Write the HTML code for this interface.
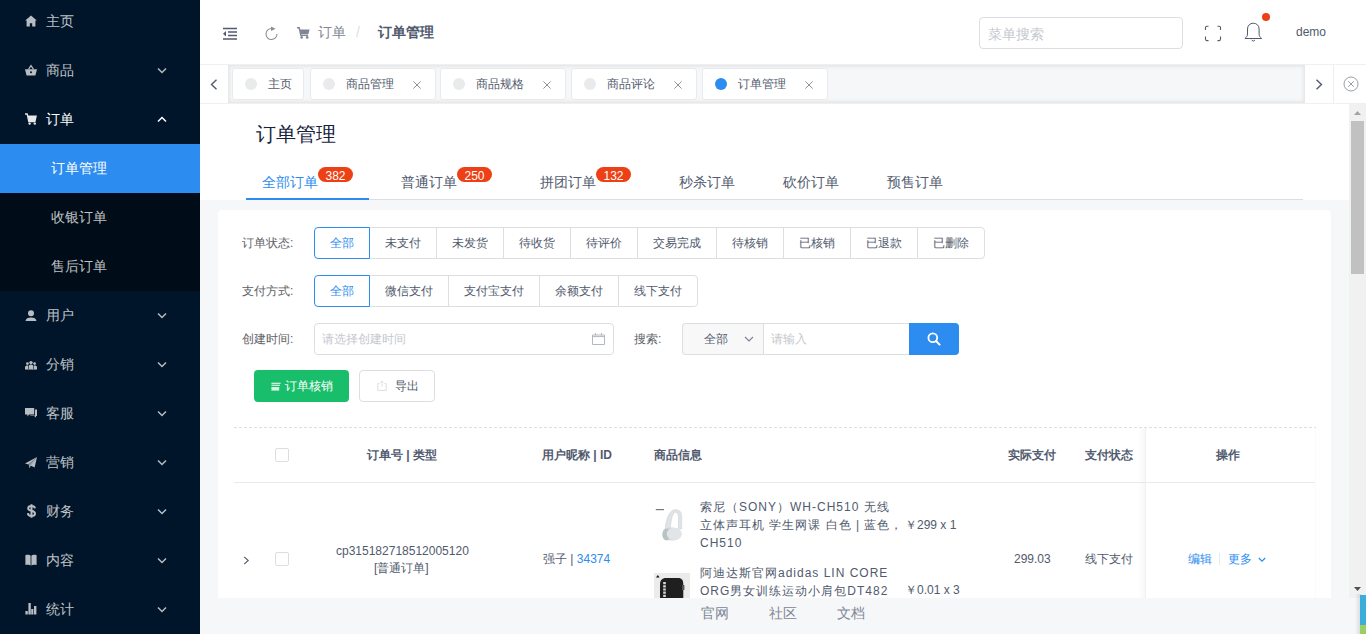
<!DOCTYPE html>
<html><head><meta charset="utf-8">
<style>
*{box-sizing:border-box;margin:0;padding:0}
html,body{width:1366px;height:634px;overflow:hidden;background:#f5f7f9;font-family:"Liberation Sans",sans-serif;}
.a{position:absolute}
/* sidebar */
#side{position:absolute;left:0;top:0;width:200px;height:634px;background:#001529;overflow:hidden}
.mi{position:absolute;left:0;width:200px;height:49px;line-height:49px;font-size:14px;color:rgba(255,255,255,.75)}
.mi .ic{position:absolute;left:25px;top:18px;width:12px;height:12px}
.mi .tx{position:absolute;left:46px;top:0}
.mi .ch{position:absolute;left:157px;top:21px;width:10px;height:7px}
.sub{position:absolute;left:0;width:200px;height:49px;line-height:49px;font-size:14px;color:rgba(255,255,255,.75);background:#000c17}
.sub .tx{position:absolute;left:51px;top:0}
/* header */
#hdr{position:absolute;left:200px;top:0;width:1166px;height:64px;background:#fff}
#tabs{position:absolute;left:200px;top:64px;width:1166px;height:40px;background:#fff;border-top:1px solid #f0f0f0;border-bottom:1px solid #f0f0f0}
#so{position:absolute;left:28px;top:0;width:1077px;height:38px;background:#f5f7f9;box-shadow:inset 0 0 3px 2px rgba(100,100,100,.1)}
.tg{position:absolute;top:3px;height:32px;background:#fff;border:1px solid #e8eaec;border-radius:3px;font-size:12px;color:#515a6e;line-height:30px}
.tg .dot{position:absolute;left:12px;top:9px;width:12px;height:12px;border-radius:50%;background:#e8eaec}
.tg .t{position:absolute;left:35px;top:0}
.tg .x{position:absolute;top:12px;width:8px;height:8px}
/* content */
#main{position:absolute;left:200px;top:104px;width:1149px;height:494px;overflow:hidden;background:#f5f7f9}
#foot{position:absolute;left:200px;top:598px;width:1166px;height:36px;background:#f5f7f9;font-size:14px;color:#808695}
.lab{position:absolute;font-size:12px;color:#606266;line-height:32px}
.rb{position:absolute;height:32px;line-height:30px;font-size:12px;color:#515a6e;border:1px solid #dcdee2;background:#fff;text-align:center}
.bdg{position:absolute;top:63px;height:15px;width:35px;border-radius:8px;background:#ed4014;color:#fff;font-size:12px;line-height:18px;text-align:center}
.cb{position:absolute;width:14px;height:14px;border:1px solid #dcdee2;border-radius:2px;background:#fff}
.th{position:absolute;top:236px;font-size:12px;line-height:18px;font-weight:bold;color:#515a6e;white-space:nowrap}
.td{position:absolute;font-size:12px;line-height:18px;color:#515a6e;white-space:nowrap}
.gi{font-size:12px;line-height:18px;color:#515a6e;letter-spacing:1px;white-space:nowrap}
</style></head><body>

<div id="side">
  <div class="mi" style="top:-3px"><svg class="ic" viewBox="0 0 12 12"><path d="M6 0.6L0.2 5.6H1.6V11.6H4.8V8.2H7.2V11.6H10.4V5.6H11.8Z" fill="#b8bcc3"/></svg><span class="tx">主页</span></div>
  <div class="mi" style="top:46px"><svg class="ic" viewBox="0 0 12 12"><path d="M0 5.2H12L10.4 11.6H1.6Z" fill="#b8bcc3"/><path d="M3.6 5.2L6 1.6L8.4 5.2" stroke="#b8bcc3" stroke-width="1.2" fill="none"/><circle cx="6" cy="8.2" r="1" fill="#001529"/></svg><span class="tx">商品</span><svg class="ch" viewBox="0 0 10 7"><path d="M1 1.5L5 5.5L9 1.5" stroke="#b8bcc3" stroke-width="1.5" fill="none"/></svg></div>
  <div class="mi" style="top:95px;color:#fff"><svg class="ic" viewBox="0 0 12 12"><path d="M0 1H2.2L3.8 8.6H10.6" stroke="#e8e8ea" stroke-width="1.3" fill="none"/><path d="M2.6 2.6H11.9L10.7 8H3.8Z" fill="#e8e8ea"/><circle cx="4.6" cy="10.6" r="1.2" fill="#e8e8ea"/><circle cx="9.8" cy="10.6" r="1.2" fill="#e8e8ea"/></svg><span class="tx">订单</span><svg class="ch" viewBox="0 0 10 7"><path d="M1 5.5L5 1.5L9 5.5" stroke="#fff" stroke-width="1.5" fill="none"/></svg></div>
  <div class="sub" style="top:144px;background:#2d8cf0;color:#fff"><span class="tx">订单管理</span></div>
  <div class="sub" style="top:193px"><span class="tx">收银订单</span></div>
  <div class="sub" style="top:242px"><span class="tx">售后订单</span></div>
  <div class="mi" style="top:291px"><svg class="ic" viewBox="0 0 12 12"><circle cx="6" cy="4.2" r="3" fill="#b8bcc3"/><path d="M0.5 12.4C0.5 9.6 2.8 8.4 6 8.4S11.5 9.6 11.5 12.4Z" fill="#b8bcc3"/></svg><span class="tx">用户</span><svg class="ch" viewBox="0 0 10 7"><path d="M1 1.5L5 5.5L9 1.5" stroke="#b8bcc3" stroke-width="1.5" fill="none"/></svg></div>
  <div class="mi" style="top:340px"><svg class="ic" viewBox="0 0 12 12"><circle cx="6" cy="4.6" r="1.7" fill="#b8bcc3"/><circle cx="2.4" cy="5.6" r="1.4" fill="#b8bcc3"/><circle cx="9.6" cy="5.6" r="1.4" fill="#b8bcc3"/><path d="M3.7 11V8.6C3.7 7.3 4.7 6.6 6 6.6S8.3 7.3 8.3 8.6V11Z" fill="#b8bcc3"/><path d="M0 11V9.2C0 8 1 7.4 2.4 7.4C2.9 7.4 3.1 7.5 3.1 7.5V11Z" fill="#b8bcc3"/><path d="M12 11V9.2C12 8 11 7.4 9.6 7.4C9.1 7.4 8.9 7.5 8.9 7.5V11Z" fill="#b8bcc3"/><path d="M0 11.4H12" stroke="#b8bcc3" stroke-width="0.6"/></svg><span class="tx">分销</span><svg class="ch" viewBox="0 0 10 7"><path d="M1 1.5L5 5.5L9 1.5" stroke="#b8bcc3" stroke-width="1.5" fill="none"/></svg></div>
  <div class="mi" style="top:389px"><svg class="ic" viewBox="0 0 12 12"><path d="M0 1H9.2V7.6H4.2L2.4 9.4V7.6H0Z" fill="#b8bcc3"/><path d="M10 2.4H12V9H11V10.8L9.2 9H5.2V8.4H10Z" fill="#b8bcc3"/></svg><span class="tx">客服</span><svg class="ch" viewBox="0 0 10 7"><path d="M1 1.5L5 5.5L9 1.5" stroke="#b8bcc3" stroke-width="1.5" fill="none"/></svg></div>
  <div class="mi" style="top:438px"><svg class="ic" viewBox="0 0 12 12"><path d="M12 1L0 7.4L3.6 8.6Z" fill="#b8bcc3"/><path d="M12 1L4.4 9L9.6 11.6Z" fill="#b8bcc3"/><path d="M12 1L3.8 8.8L4.4 12.6L5.8 9.8Z" fill="#9aa0a8"/></svg><span class="tx">营销</span><svg class="ch" viewBox="0 0 10 7"><path d="M1 1.5L5 5.5L9 1.5" stroke="#b8bcc3" stroke-width="1.5" fill="none"/></svg></div>
  <div class="mi" style="top:487px"><svg class="ic" style="left:26px;top:17px;width:11px;height:14px" viewBox="0 0 11 14"><path d="M8.9 4.3C8.7 2.7 7.4 2.1 5.5 2.1C3.5 2.1 2.2 3 2.2 4.5C2.2 7.6 9 6 9 9.4C9 11 7.6 11.9 5.5 11.9C3.3 11.9 2 10.9 1.9 9.1 M5.5 0.2V13.8" stroke="#b8bcc3" stroke-width="2" fill="none"/></svg><span class="tx">财务</span><svg class="ch" viewBox="0 0 10 7"><path d="M1 1.5L5 5.5L9 1.5" stroke="#b8bcc3" stroke-width="1.5" fill="none"/></svg></div>
  <div class="mi" style="top:536px"><svg class="ic" viewBox="0 0 12 12"><path d="M0.4 1.2C2.4 0.6 4.6 0.8 5.6 1.8V11.6C4.6 10.6 2.4 10.4 0.4 11Z" fill="#b8bcc3"/><path d="M11.6 1.2C9.6 0.6 7.4 0.8 6.4 1.8V11.6C7.4 10.6 9.6 10.4 11.6 11Z" fill="#b8bcc3"/></svg><span class="tx">内容</span><svg class="ch" viewBox="0 0 10 7"><path d="M1 1.5L5 5.5L9 1.5" stroke="#b8bcc3" stroke-width="1.5" fill="none"/></svg></div>
  <div class="mi" style="top:585px"><svg class="ic" viewBox="0 0 12 12"><path d="M0.4 8H2.8V11.6H0.4Z M3.4 0H5.8V11.6H3.4Z M6.2 6H8.4V11.6H6.2Z M9 3H11.4V11.6H9Z" fill="#b8bcc3"/></svg><span class="tx">统计</span><svg class="ch" viewBox="0 0 10 7"><path d="M1 1.5L5 5.5L9 1.5" stroke="#b8bcc3" stroke-width="1.5" fill="none"/></svg></div>
</div>

<div id="hdr">
  <svg class="a" style="left:22px;top:27px" width="16" height="14" viewBox="0 0 16 14"><path d="M1 1.5H15M6 5H15M6 8.5H15M1 12H15" stroke="#515a6e" stroke-width="1.4" fill="none"/><path d="M4 4L1 6.8L4 9.6Z" fill="#515a6e"/></svg>
  <svg class="a" style="left:64px;top:26px" width="15" height="15" viewBox="0 0 15 15"><path d="M7.8 2.5A5.5 5.5 0 1 0 13 8" stroke="#8a8e96" stroke-width="1.1" fill="none"/><path d="M7 0.4L11.6 2.7L7 5Z" fill="#8a8e96"/></svg>
  <svg class="a" style="left:97px;top:27px" width="13" height="12" viewBox="0 0 13 12"><path d="M0 0.8H2.2L3.8 8.4H11" stroke="#808695" stroke-width="1.4" fill="none"/><path d="M2.8 2.4H12.6L11.4 7.2H3.8Z" fill="#808695"/><circle cx="4.6" cy="10.4" r="1.3" fill="#808695"/><circle cx="10.2" cy="10.4" r="1.3" fill="#808695"/></svg>
  <span class="a" style="left:118px;top:24px;font-size:14px;color:#808695">订单</span>
  <span class="a" style="left:156px;top:24px;font-size:14px;color:#dcdee2">/</span>
  <span class="a" style="left:178px;top:24px;font-size:14px;color:#515a6e;font-weight:bold">订单管理</span>
  <div class="a" style="left:779px;top:17px;width:204px;height:32px;border:1px solid #dcdee2;border-radius:4px"><span class="a" style="left:8px;top:8px;font-size:14px;color:#c5c8ce">菜单搜索</span></div>
  <svg class="a" style="left:1004px;top:25px" width="18" height="17" viewBox="0 0 18 17"><path d="M1.5 5V2.5Q1.5 1.2 2.8 1.2H4.5M13.5 1.2H15.2Q16.5 1.2 16.5 2.5V5M16.5 11.5V14Q16.5 15.6 15.2 15.6H13.5M4.5 15.6H2.8Q1.5 15.6 1.5 14V11.5" stroke="#515a6e" stroke-width="1.1" fill="none"/></svg>
  <svg class="a" style="left:1044px;top:22px" width="19" height="21" viewBox="0 0 19 21"><path d="M0.9 16.5C2.6 15 3.5 14 3.5 12V7C3.5 3.6 6 1.2 9.3 1.2C12.6 1.2 15.1 3.6 15.1 7V12C15.1 14 16 15 17.7 16.5Z" stroke="#515a6e" stroke-width="1" fill="none" stroke-linejoin="round"/><path d="M7.6 18Q9.3 20.4 11 18" stroke="#515a6e" stroke-width="1" fill="none"/></svg>
  <div class="a" style="left:1062px;top:13px;width:8px;height:8px;border-radius:50%;background:#ed4014"></div>
  <span class="a" style="left:1096px;top:25px;font-size:12px;color:#515a6e">demo</span>
</div>
<div id="tabs">
  <div id="so"></div>
  <div class="a" style="left:0;top:0;width:28px;height:38px;background:#fff"><svg class="a" style="left:10px;top:14px" width="8" height="11" viewBox="0 0 8 11"><path d="M6.5 0.8L1.5 5.5L6.5 10.2" stroke="#515a6e" stroke-width="1.4" fill="none"/></svg></div>
  <div class="tg" style="left:32px;width:72px"><div class="dot"></div><span class="t">主页</span></div>
  <div class="tg" style="left:110px;width:126px"><div class="dot"></div><span class="t">商品管理</span><svg class="x" style="left:102px" viewBox="0 0 8 8"><path d="M0.4 0.4L7.6 7.6M7.6 0.4L0.4 7.6" stroke="#8e939b" stroke-width="1"/></svg></div>
  <div class="tg" style="left:240px;width:126px"><div class="dot"></div><span class="t">商品规格</span><svg class="x" style="left:102px" viewBox="0 0 8 8"><path d="M0.4 0.4L7.6 7.6M7.6 0.4L0.4 7.6" stroke="#8e939b" stroke-width="1"/></svg></div>
  <div class="tg" style="left:371px;width:126px"><div class="dot"></div><span class="t">商品评论</span><svg class="x" style="left:102px" viewBox="0 0 8 8"><path d="M0.4 0.4L7.6 7.6M7.6 0.4L0.4 7.6" stroke="#8e939b" stroke-width="1"/></svg></div>
  <div class="tg" style="left:502px;width:126px"><div class="dot" style="background:#2d8cf0"></div><span class="t">订单管理</span><svg class="x" style="left:102px" viewBox="0 0 8 8"><path d="M0.4 0.4L7.6 7.6M7.6 0.4L0.4 7.6" stroke="#8e939b" stroke-width="1"/></svg></div>
  <div class="a" style="left:1105px;top:0;width:29px;height:38px;background:#fff;border-right:1px solid #eee"><svg class="a" style="left:10px;top:14px" width="8" height="11" viewBox="0 0 8 11"><path d="M1.5 0.8L6.5 5.5L1.5 10.2" stroke="#515a6e" stroke-width="1.4" fill="none"/></svg></div>
  <div class="a" style="left:1134px;top:0;width:32px;height:38px;background:#fff"><svg class="a" style="left:9px;top:11px" width="16" height="16" viewBox="0 0 16 16"><circle cx="8" cy="8" r="7" stroke="#9a9ea6" stroke-width="1" fill="none"/><path d="M5.2 5.2L10.8 10.8M10.8 5.2L5.2 10.8" stroke="#9a9ea6" stroke-width="1"/></svg></div>
</div>
<div id="main">
  <div class="a" style="left:0;top:0;width:1149px;height:96px;background:#fff">
    <span class="a" style="left:56px;top:17px;font-size:20px;color:#17233d">订单管理</span>
    <div class="a" style="left:46px;top:95px;width:1057px;height:1px;background:#dcdee2"></div>
    <div class="a" style="left:46px;top:94px;width:123px;height:2px;background:#2d8cf0"></div>
    <span class="a" style="left:62px;top:70px;font-size:14px;color:#2d8cf0">全部订单</span>
    <span class="bdg" style="left:118px">382</span>
    <span class="a" style="left:201px;top:70px;font-size:14px;color:#515a6e">普通订单</span>
    <span class="bdg" style="left:257px">250</span>
    <span class="a" style="left:340px;top:70px;font-size:14px;color:#515a6e">拼团订单</span>
    <span class="bdg" style="left:396px">132</span>
    <span class="a" style="left:479px;top:70px;font-size:14px;color:#515a6e">秒杀订单</span>
    <span class="a" style="left:583px;top:70px;font-size:14px;color:#515a6e">砍价订单</span>
    <span class="a" style="left:687px;top:70px;font-size:14px;color:#515a6e">预售订单</span>
  </div>
  <div id="card" class="a" style="left:18px;top:106px;width:1113px;height:420px;background:#fff;border-radius:4px">
    <span class="lab" style="left:24px;top:17px">订单状态:</span>
    <div class="rb" style="left:96px;top:17px;width:56px;border-radius:4px 0 0 4px;border-color:#2d8cf0;color:#2d8cf0;z-index:2;">全部</div>
    <div class="rb" style="left:151px;top:17px;width:68px;">未支付</div>
    <div class="rb" style="left:218px;top:17px;width:68px;">未发货</div>
    <div class="rb" style="left:285px;top:17px;width:68px;">待收货</div>
    <div class="rb" style="left:352px;top:17px;width:68px;">待评价</div>
    <div class="rb" style="left:419px;top:17px;width:80px;">交易完成</div>
    <div class="rb" style="left:498px;top:17px;width:68px;">待核销</div>
    <div class="rb" style="left:565px;top:17px;width:68px;">已核销</div>
    <div class="rb" style="left:632px;top:17px;width:68px;">已退款</div>
    <div class="rb" style="left:699px;top:17px;width:68px;border-radius:0 4px 4px 0;">已删除</div>
    <span class="lab" style="left:24px;top:65px">支付方式:</span>
    <div class="rb" style="left:96px;top:65px;width:56px;border-radius:4px 0 0 4px;border-color:#2d8cf0;color:#2d8cf0;z-index:2;">全部</div>
    <div class="rb" style="left:151px;top:65px;width:80px;">微信支付</div>
    <div class="rb" style="left:230px;top:65px;width:92px;">支付宝支付</div>
    <div class="rb" style="left:321px;top:65px;width:80px;">余额支付</div>
    <div class="rb" style="left:400px;top:65px;width:80px;border-radius:0 4px 4px 0;">线下支付</div>
    <span class="lab" style="left:24px;top:113px">创建时间:</span>
    <div class="a" style="left:96px;top:113px;width:300px;height:32px;border:1px solid #dcdee2;border-radius:4px;background:#fff">
      <span class="a" style="left:7px;top:7px;font-size:12px;color:#c5c8ce;line-height:16px">请选择创建时间</span>
      <svg class="a" style="left:277px;top:9px" width="13" height="12" viewBox="0 0 13 12"><path d="M0.5 2H12.5V11.5H0.5Z M0.5 3.6H12.5 M3.5 0V2.5 M9.5 0V2.5" stroke="#b3b7bf" stroke-width="1" fill="none"/></svg>
    </div>
    <span class="lab" style="left:416px;top:113px">搜索:</span>
    <div class="a" style="left:464px;top:113px;width:82px;height:32px;border:1px solid #dcdee2;border-right:0;border-radius:4px 0 0 4px;background:#f8f8f9">
      <span class="a" style="left:21px;top:7px;font-size:12px;color:#515a6e;line-height:16px">全部</span>
      <svg class="a" style="left:61px;top:12px" width="10" height="7" viewBox="0 0 10 7"><path d="M1 1L5 5L9 1" stroke="#808695" stroke-width="1.2" fill="none"/></svg>
    </div>
    <div class="a" style="left:545px;top:113px;width:147px;height:32px;border:1px solid #dcdee2;background:#fff">
      <span class="a" style="left:7px;top:7px;font-size:12px;color:#c5c8ce;line-height:16px">请输入</span>
    </div>
    <div class="a" style="left:691px;top:113px;width:50px;height:32px;background:#2d8cf0;border-radius:0 4px 4px 0">
      <svg class="a" style="left:18px;top:9px" width="14" height="14" viewBox="0 0 14 14"><circle cx="5.8" cy="5.8" r="4.4" stroke="#fff" stroke-width="1.8" fill="none"/><path d="M9 9L12.6 12.6" stroke="#fff" stroke-width="2" stroke-linecap="round"/></svg>
    </div>
    <div class="a" style="left:36px;top:160px;width:95px;height:32px;background:#19be6b;border-radius:4px">
      <svg class="a" style="left:17px;top:12px" width="10" height="9" viewBox="0 0 10 9"><path d="M0.4 1.3H9.6M0.4 3.3H9" stroke="#fff" stroke-width="1.1" fill="none"/><rect x="0.4" y="5" width="7.8" height="3.6" fill="#d8f2e3"/></svg>
      <span class="a" style="left:31px;top:8px;font-size:12px;color:#fff;line-height:16px">订单核销</span>
    </div>
    <div class="a" style="left:141px;top:160px;width:76px;height:32px;background:#fff;border:1px solid #dcdee2;border-radius:4px">
      <svg class="a" style="left:17px;top:9px" width="10" height="11" viewBox="0 0 10 11"><path d="M2.5 3.6H0.8V10.4H9.2V3.6H7.5 M5 1V6.8 M3.6 2.4L5 1L6.4 2.4" stroke="#dcdee2" stroke-width="1" fill="none"/></svg>
      <span class="a" style="left:35px;top:7px;font-size:12px;color:#515a6e;line-height:16px">导出</span>
    </div>
    <div class="a" style="left:16px;top:217px;width:1082px;height:1px;background:repeating-linear-gradient(90deg,#dcdee2 0 3px,transparent 3px 5px)"></div>
    <div class="a" style="left:16px;top:272px;width:1082px;height:1px;background:#e8eaec"></div>
    <div class="cb" style="left:57px;top:238px"></div>
    <span class="th" style="left:149px">订单号 | 类型</span>
    <span class="th" style="left:324px">用户昵称 | ID</span>
    <span class="th" style="left:436px">商品信息</span>
    <span class="th" style="left:790px">实际支付</span>
    <span class="th" style="left:867px">支付状态</span>
    <span class="th" style="left:998px">操作</span>
    <div class="a" style="left:920px;top:218px;width:8px;height:300px;background:linear-gradient(90deg,rgba(0,0,0,0),rgba(0,0,0,.035))"></div>
    <div class="a" style="left:927px;top:218px;width:1px;height:300px;background:#f0f0f0"></div>
    <div class="a" style="left:1097px;top:218px;width:1px;height:300px;background:#fafafa"></div>
    <svg class="a" style="left:25px;top:346px" width="7" height="9" viewBox="0 0 7 9"><path d="M1.2 0.8L5.2 4.5L1.2 8.2" stroke="#515a6e" stroke-width="1.15" fill="none"/></svg>
    <div class="cb" style="left:57px;top:342px"></div>
    <span class="td" style="left:118px;top:332px">cp315182718512005120</span>
    <span class="td" style="left:156px;top:349px">[普通订单]</span>
    <span class="td" style="left:325px;top:340px">强子 | <span style="color:#2d8cf0">34374</span></span>
    <svg class="a" style="left:436px;top:296px" width="36" height="36" viewBox="0 0 36 36"><rect width="36" height="36" fill="#fff"/><path d="M1.8 3.6H10" stroke="#777" stroke-width="1.2"/><path d="M11.2 23C12 12 16 3.7 21 3.7C25 3.7 27.7 5.5 27.7 10V23H24.5V12C24.5 8.5 23.5 6.2 21.5 6.2C19 6.2 16.8 13 16.3 23Z" fill="#dfe3e5" stroke="#cdd3d6" stroke-width="0.6"/><ellipse cx="18" cy="28" rx="9.6" ry="6.6" fill="#cfd6d9"/><ellipse cx="12.4" cy="28.4" rx="4" ry="6" fill="#b9c2c5"/><ellipse cx="20.2" cy="28" rx="7.4" ry="6.2" fill="#e1e5e7"/></svg>
    <svg class="a" style="left:436px;top:363px" width="36" height="36" viewBox="0 0 36 36"><rect width="36" height="36" fill="#ebebeb"/><path d="M2 4.4L3.8 2L5.6 4.4Z" fill="#111"/><path d="M6 12C6 7 8 5 12 5H24C28 5 29.3 7 29.3 12V36H6Z" fill="#1f1f1f"/><path d="M10.5 9V26" stroke="#d8d8d8" stroke-width="2.6" stroke-dasharray="2.2 1"/><rect x="28" y="12" width="2.4" height="5" fill="#555"/></svg>
    <div class="a gi" style="left:482px;top:288px">索尼（SONY）WH-CH510 无线<br>立体声耳机 学生网课 白色 | 蓝色，<br>CH510</div>
    <span class="td" style="left:687px;top:306px">￥299 x 1</span>
    <div class="a gi" style="left:482px;top:354px">阿迪达斯官网adidas LIN CORE<br>ORG男女训练运动小肩包DT482<br>黑色</div>
    <span class="td" style="left:687px;top:371px">￥0.01 x 3</span>
    <span class="td" style="left:796px;top:340px">299.03</span>
    <span class="td" style="left:867px;top:340px">线下支付</span>
    <span class="td" style="left:970px;top:340px;color:#2d8cf0">编辑</span>
    <div class="a" style="left:1001px;top:343px;width:1px;height:12px;background:#e8eaec"></div>
    <span class="td" style="left:1010px;top:340px;color:#2d8cf0">更多</span>
    <svg class="a" style="left:1040px;top:347px" width="8" height="6" viewBox="0 0 8 6"><path d="M0.8 1L4 4.2L7.2 1" stroke="#2d8cf0" stroke-width="1.2" fill="none"/></svg>
  </div>
</div>
<div id="foot">
  <span class="a" style="left:501px;top:7px">官网</span>
  <span class="a" style="left:569px;top:7px">社区</span>
  <span class="a" style="left:637px;top:7px">文档</span>
</div>

<div id="sb" class="a" style="left:1349px;top:104px;width:17px;height:494px;background:#f1f1f1">
  <svg class="a" style="left:5px;top:7px" width="7" height="4" viewBox="0 0 7 4"><path d="M0 4L3.5 0L7 4Z" fill="#a3a3a3"/></svg>
  <div class="a" style="left:2px;top:17px;width:13px;height:153px;background:#c1c1c1"></div>
  <svg class="a" style="left:5px;top:483px" width="7" height="4" viewBox="0 0 7 4"><path d="M0 0L3.5 4L7 0Z" fill="#505050"/></svg>
</div>
<div class="a" style="left:1355px;top:594px;width:6px;height:40px;background:linear-gradient(90deg,rgba(0,0,0,0),rgba(0,0,0,.12))"></div>
<div class="a" style="left:1360px;top:595px;width:6px;height:30px;background:#3aaed8"></div>
<div class="a" style="left:1360px;top:625px;width:6px;height:9px;background:#9ccf63"></div>
</body></html>
